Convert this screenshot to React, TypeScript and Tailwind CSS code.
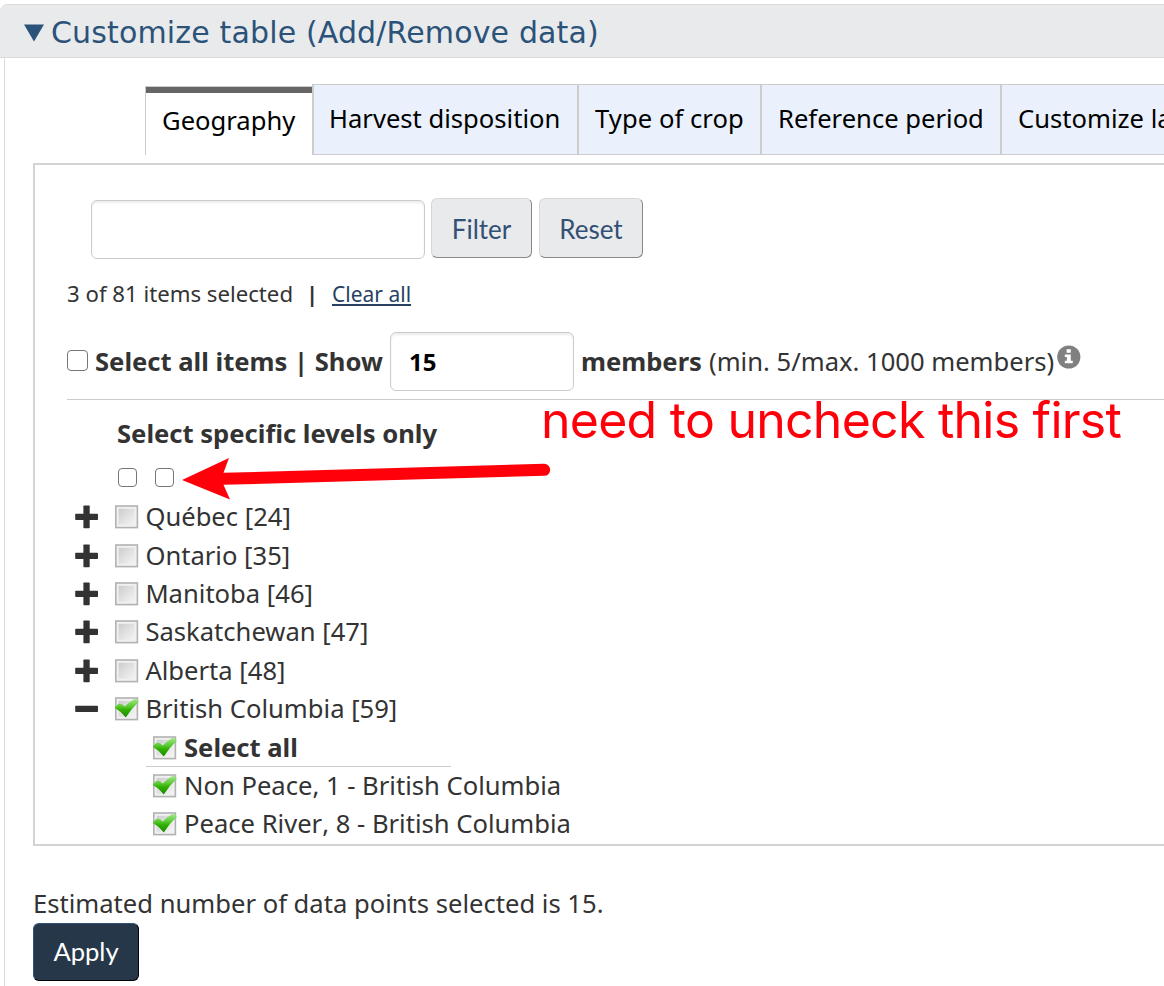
import React from "react";

const provinces = [
  { name: "Québec [24]", open: false },
  { name: "Ontario [35]", open: false },
  { name: "Manitoba [46]", open: false },
  { name: "Saskatchewan [47]", open: false },
  { name: "Alberta [48]", open: false },
  { name: "British Columbia [59]", open: true },
];

function Toggle({ open }: { open: boolean }) {
  return (
    <svg className="h-6 w-6 shrink-0" viewBox="0 0 24 24" fill="#333">
      <rect x="0.2" y="8.8" width="22.8" height="6.2" rx="0.8" />
      {!open && <rect x="8.4" y="0.5" width="6.3" height="22.8" rx="0.8" />}
    </svg>
  );
}

function TreeCheck({ checked }: { checked: boolean }) {
  return (
    <svg className="h-6 w-6 shrink-0" viewBox="0 0 24 24">
      <defs>
        <linearGradient id="box" x1="0" y1="0" x2="1" y2="1">
          <stop offset="0" stopColor="#cdcdcd" />
          <stop offset="1" stopColor="#f4f4f4" />
        </linearGradient>
        <linearGradient id="tick" x1="0" y1="0" x2="0" y2="1">
          <stop offset="0" stopColor="#a5e88c" />
          <stop offset="0.4" stopColor="#5ccb35" />
          <stop offset="0.6" stopColor="#30b000" />
          <stop offset="1" stopColor="#1c8a00" />
        </linearGradient>
      </defs>
      <rect x="0.8" y="1" width="21.6" height="21.6" fill="#f0f0f0" stroke="#b2b2b2" strokeWidth="1.6" />
      <rect x="3.6" y="3.8" width="16" height="16" fill="url(#box)" />
      {checked && (
        <path
          d="M-0.2 10.8 Q2.2 7 4.4 6.4 Q7.6 7 9.8 9.6 Q14 4.6 20 1.8 Q22.8 2.6 23.8 4.8 Q16.6 11.4 10.8 20.4 Q6.6 14.6 -0.2 10.8 Z"
          fill="url(#tick)"
        />
      )}
    </svg>
  );
}

function Box({ className }: { className: string }) {
  return <span className={"block shrink-0 rounded-[4px] border border-[#767676] bg-white " + className} />;
}

export default function App() {
  return (
    <div className="relative h-[986px] w-[1164px] overflow-hidden bg-white pt-1 font-['Noto_Sans',sans-serif] text-[25.6px] text-[#333]">
      <header className="flex h-[54px] w-[1200px] items-center rounded-tl-[8px] border-y border-[#d9dbdc] bg-[#e9eaec] pl-6 text-[#2b5379]">
        <svg className="mr-[7px] mt-1 h-[18px] w-5 shrink-0" viewBox="0 0 20 18" fill="#2b5379">
          <path d="M0 0.5 H20 L10 17.5 Z" />
        </svg>
        <h1 className="whitespace-nowrap pt-1 font-['DejaVu_Sans',sans-serif] text-[30px] leading-[44px] tracking-[0.15px]">Customize table (Add/Remove data)</h1>
      </header>

      <main className="ml-1 h-[930px] w-[1200px] border-l border-[#d9dbdc] pl-7 pt-[26px]">
        <nav className="ml-28 flex h-[71px] w-[1100px] items-end whitespace-nowrap text-black">
          <div className="h-[69px] w-[167px] shrink-0 border-l border-t border-[#ccc]">
            <div className="h-1.5 bg-[#666]" />
            <div className="pl-4 leading-[55px]">Geography</div>
          </div>
          <div className="h-[71px] w-[266px] shrink-0 border border-l-2 border-[#ccc] bg-[#eaf1fc] pl-[15px] leading-[68px]">Harvest disposition</div>
          <div className="h-[71px] w-[183px] shrink-0 border border-[#ccc] bg-[#eaf1fc] pl-4 leading-[68px] tracking-[0.06px]">Type of crop</div>
          <div className="h-[71px] w-[240px] shrink-0 border border-[#ccc] bg-[#eaf1fc] pl-4 leading-[68px]">Reference period</div>
          <div className="h-[71px] w-[240px] shrink-0 border border-[#ccc] bg-[#eaf1fc] pl-4 leading-[68px]">Customize layout</div>
        </nav>

        <section className="mt-2 h-[683px] w-[1180px] border-2 border-[#d3d3d3] pl-8 pt-[33px]">
          <div className="ml-6 flex h-[61px] items-start font-['Lato',sans-serif] text-[26px] text-[#335075]">
            <div className="mt-0.5 h-[59px] w-[334px] rounded-[6px] border border-[#ccc] bg-white shadow-[inset_0_2px_2px_rgba(0,0,0,0.075)]" />
            <button className="ml-1.5 h-[60px] w-[101px] rounded-[6px] border border-b-[#888] border-l-[#d5d7da] border-r-[#888] border-t-[#d5d7da] bg-[#e9eaec] pt-0.5">Filter</button>
            <button className="ml-[7px] h-[60px] w-[104px] rounded-[6px] border border-b-[#888] border-l-[#d5d7da] border-r-[#888] border-t-[#d5d7da] bg-[#e9eaec] pt-0.5">Reset</button>
          </div>

          <div className="mt-5 flex h-[30px] items-center whitespace-nowrap text-[22.2px] leading-[30px]">
            <span className="w-[239px]">3 of 81 items selected</span>
            <span className="w-[26px] font-bold">|</span>
            <a className="text-[21px] text-[#284162] underline decoration-2 underline-offset-2">Clear all</a>
          </div>

          <div className="mt-[23px] flex h-[59px] items-center whitespace-nowrap font-bold">
            <Box className="mb-0.5 mr-[7px] h-[21px] w-[21px]" />
            <span className="w-[295px] pt-0.5">Select all items | Show</span>
            <div className="h-[59px] w-[184px] rounded-[6px] border border-[#ccc] pl-[18px] text-2xl leading-[58px] text-black shadow-[inset_0_2px_2px_rgba(0,0,0,0.075)]">15</div>
            <span className="ml-[7px] w-[128px] pt-0.5">members</span>
            <span className="w-[348px] pt-0.5 font-normal">(min. 5/max. 1000 members)</span>
            <svg className="mb-[9px] h-6 w-6" viewBox="0 0 24 24">
              <circle cx="11.8" cy="12" r="11.6" fill="#808080" />
              <path d="M9.6 4.2h4.2v3.6h-4.2z M7.8 9.6h6v6.2h2v2.5h-8v-2.5h2.1v-3.7h-2.1z" fill="#fff" />
            </svg>
          </div>

          <hr className="mt-2 w-[1140px] border-[#ccc]" />

          <div className="ml-[50px] mt-4 h-9 whitespace-nowrap font-bold leading-9">Select specific levels only</div>
          <div className="ml-[51px] mt-4 flex h-[19px] gap-[18px]">
            <Box className="h-[19px] w-[19px]" />
            <Box className="h-[19px] w-[19px]" />
          </div>

          <ul className="ml-2 mt-[11px]">
            {provinces.map((p) => (
              <li key={p.name} className="flex h-[38.4px] items-center whitespace-nowrap">
                <Toggle open={p.open} />
                <span className="ml-4 mr-[6.4px] flex">
                  <TreeCheck checked={p.open} />
                </span>
                <span className="leading-9">{p.name}</span>
              </li>
            ))}
          </ul>
          <ul className="ml-[79px]">
            {["Select all", "Non Peace, 1 - British Columbia", "Peace River, 8 - British Columbia"].map((n, i) => (
              <li
                key={n}
                className={
                  "flex h-[38.4px] items-center gap-[7px] whitespace-nowrap pl-[7px] " +
                  (i === 0 ? "w-[305px] border-b border-[#ccc] pt-px font-bold" : "")
                }
              >
                <TreeCheck checked />
                <span className={"leading-9 " + (i === 2 ? "[font-kerning:none]" : "")}>{n}</span>
              </li>
            ))}
          </ul>
        </section>

        <p className="mt-10 h-[37px] whitespace-nowrap leading-9">Estimated number of data points selected is 15.</p>
        <button className="block h-[58px] w-[106px] rounded-[6px] border border-b-black border-l-[#335075] border-r-black border-t-[#335075] bg-[#26374a] pb-0.5 font-['Lato',sans-serif] text-white">
          Apply
        </button>
      </main>

      <div className="absolute left-[541px] top-[390px] whitespace-nowrap font-['Inter',sans-serif] text-[50px] leading-[60px] tracking-[-0.75px] text-[#ff000b]">
        need to uncheck this first
      </div>
      <svg className="absolute left-[180px] top-[454px] h-[50px] w-[376px]" viewBox="180 454 376 50" fill="#ff000b">
        <path d="M182 480 L229 458 L223.5 472.8 L544 463.8 A6 6 0 0 1 544.4 475.8 L223.5 484.8 L230 499.4 Z" />
      </svg>
    </div>
  );
}
